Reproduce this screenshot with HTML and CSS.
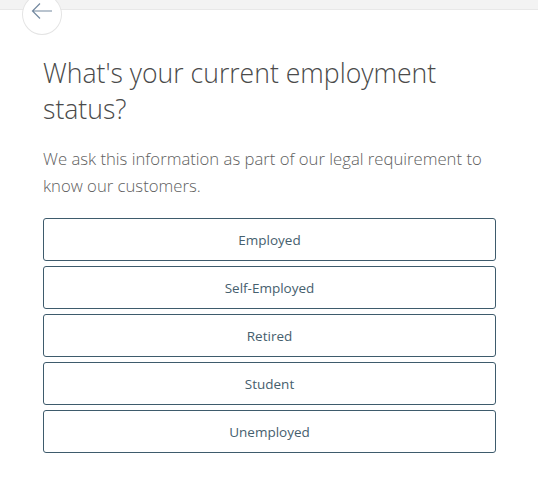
FILE: index.html
```html
<!DOCTYPE html>
<html>
<head>
<meta charset="utf-8">
<link rel="stylesheet" href="styles.css">
</head>
<body>
<div class="topbar"></div>
<main class="card">
  <button class="back" aria-label="Back">
    <svg width="22" height="18" viewBox="0 0 22 18"><path d="M21 9H2M9 1.5L1.5 9L9 16.5" fill="none" stroke="#7489a0" stroke-width="1.2"/></svg>
  </button>
  <h1 class="title">What's your current employment status?</h1>
  <p class="lead">We ask this information as part of our legal requirement to know our customers.</p>
  <div class="options">
    <button class="option">Employed</button>
    <button class="option">Self-Employed</button>
    <button class="option">Retired</button>
    <button class="option">Student</button>
    <button class="option">Unemployed</button>
  </div>
</main>
</body>
</html>
```
FILE: styles.css
```css
html, body {
  margin: 0;
  padding: 0;
  background: #ffffff;
  font-family: "Open Sans", "Liberation Sans", sans-serif;
}
.topbar {
  height: 9px;
  background: #f3f3f3;
  border-bottom: 1px solid #e8e8e8;
}
.card {
  position: relative;
  padding: 45px 40px 0 43px;
}
.back {
  position: absolute;
  left: 22px;
  top: -16px;
  width: 40px;
  height: 41px;
  border-radius: 50%;
  border: 1px solid #e4e4e4;
  background: #fff;
  display: flex;
  align-items: center;
  justify-content: center;
  padding: 0 0 5px;
  box-sizing: border-box;
}
.back svg {
  margin-top: -2px;
}
.title {
  margin: 0;
  font-weight: 300;
  font-size: 26.6px;
  line-height: 36px;
  color: #4a4a4a;
  padding-right: 50px;
}
.lead {
  margin: 18px 0 0;
  font-weight: 300;
  font-size: 16.7px;
  line-height: 27px;
  color: #606060;
}
.options {
  margin-top: 19px;
  margin-right: 2px;
  display: flex;
  flex-direction: column;
  gap: 5px;
}
.option {
  height: 43px;
  border: 1px solid #3e5b6c;
  border-radius: 3px;
  background: #fff;
  font-family: "Open Sans", "Liberation Sans", sans-serif;
  font-size: 13.5px;
  color: #46606e;
  padding: 0;
}
```
